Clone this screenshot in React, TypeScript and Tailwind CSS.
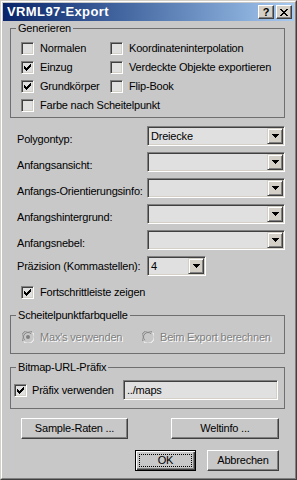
import type { ReactNode } from 'react'

const checkPath =
    'M8 2h1v1h-1z M7 3h2v1h-2z M2 4h1v1h-1z M6 4h3v1h-3z M2 5h2v1h-2z M5 5h3v1h-3z M2 6h5v1h-5z M3 7h3v1h-3z M4 8h1v1h-1z'

function Check({ checked }: { checked?: boolean }) {
    return (
        <span className="block h-[13px] w-[13px] shrink-0 border border-t-[#808080] border-l-[#808080] border-b-white border-r-white bg-[#e0e0e0] shadow-[inset_1px_1px_0_#404040,inset_-1px_-1px_0_#d4d0c8]">
            {checked && (
                <svg width="11" height="11" viewBox="0 0 11 11" className="block">
                    <path d={checkPath} fill="#000" />
                </svg>
            )}
        </span>
    )
}

function CheckRow({ label, checked }: { label: string, checked?: boolean }) {
    return (
        <label className="flex items-center gap-[6px] whitespace-nowrap">
            <Check checked={checked} />
            {label}
        </label>
    )
}

function Radio({ checked }: { checked?: boolean }) {
    return (
        <svg width="12" height="12" viewBox="0 0 12 12" className="block shrink-0">
            <path d="M1.5 10.5 A6 6 0 0 1 10.5 1.5" stroke="#808080" strokeWidth="1" fill="none" />
            <path d="M10.5 1.5 A6 6 0 0 1 1.5 10.5" stroke="#ffffff" strokeWidth="1" fill="none" />
            <circle cx="6" cy="6" r="4.5" fill="#c8c8c8" />
            <path d="M2.8 9.2 A4.5 4.5 0 0 1 9.2 2.8" stroke="#404040" strokeWidth="1" fill="none" opacity="0.5" />
            {checked && <circle cx="6" cy="6" r="2" fill="#808080" />}
        </svg>
    )
}

function Group({ title, children, className = '' }: { title: string, children: ReactNode, className?: string }) {
    return (
        <fieldset className={`border border-[#6f6f6f] pl-[3px] ${className}`}>
            <legend className="ml-[2px] px-[2px] leading-[13px]">{title}</legend>
            {children}
        </fieldset>
    )
}

function Combo({ value, width }: { value?: string, width: string }) {
    return (
        <div className={`flex h-[20px] ${width} items-center justify-between border border-t-[#808080] border-l-[#808080] border-b-white border-r-white bg-[#e0e0e0] shadow-[inset_1px_1px_0_#404040,inset_-1px_-1px_0_#d4d0c8]`}>
            <span className="pl-[3px] pt-[1px]">{value}</span>
            <span className="mr-[1px] mt-[1px] flex h-[16px] w-[16px] items-center justify-center self-start border border-t-[#d4d0c8] border-l-[#d4d0c8] border-r-[#404040] border-b-[#404040] bg-[#d4d0c8] shadow-[inset_1px_1px_0_#ffffff,inset_-1px_-1px_0_#808080]">
                <svg width="7" height="4" viewBox="0 0 7 4" className="block">
                    <path d="M0 0h7v1h-7z M1 1h5v1h-5z M2 2h3v1h-3z M3 3h1v1h-1z" fill="#000" />
                </svg>
            </span>
        </div>
    )
}

function Btn({ children, className = '' }: { children: ReactNode, className?: string }) {
    return (
        <button className={`flex h-[21px] items-center justify-center border border-t-white border-l-white border-r-[#404040] border-b-[#404040] bg-[#c8c8c8] shadow-[inset_-1px_-1px_0_#808080] ${className}`}>
            {children}
        </button>
    )
}

const rows = [
    { label: 'Polygontyp:', value: 'Dreiecke' },
    { label: 'Anfangsansicht:', value: '' },
    { label: 'Anfangs-Orientierungsinfo:', value: '' },
    { label: 'Anfangshintergrund:', value: '' },
    { label: 'Anfangsnebel:', value: '' },
]

export default function App() {
    return (
        <div className="h-[480px] w-[297px] border border-t-[#d4d0c8] border-l-[#d4d0c8] border-r-[#404040] border-b-[#404040] font-['Liberation_Sans',Arial,sans-serif] text-[11px] leading-[13px] tracking-[-0.2px] text-black">
            <div className="h-full border border-t-white border-l-white border-r-[#808080] border-b-[#808080] bg-[#c8c8c8] p-[1px]">
                {/* Titelleiste */}
                <div className="flex h-[18px] items-center justify-between bg-linear-to-r from-[#0a246a] to-[#a6caf0] pl-[4px] pr-[2px]">
                    <span className="text-[13px] font-bold leading-[18px] tracking-[0.4px] text-white">VRML97-Export</span>
                    <div className="flex gap-[2px]">
                        <span className="flex h-[14px] w-[16px] items-center justify-center border border-t-white border-l-white border-r-[#404040] border-b-[#404040] bg-[#d4d0c8] text-[11px] font-bold leading-[12px] shadow-[inset_-1px_-1px_0_#808080]">?</span>
                        <span className="flex h-[14px] w-[16px] items-center justify-center border border-t-white border-l-white border-r-[#404040] border-b-[#404040] bg-[#d4d0c8] shadow-[inset_-1px_-1px_0_#808080]">
                            <svg width="8" height="7" viewBox="0 0 8 7" className="block">
                                <path d="M0 0h2v1h-2z M6 0h2v1h-2z M1 1h2v1h-2z M5 1h2v1h-2z M2 2h4v1h-4z M3 3h2v1h-2z M2 4h4v1h-4z M1 5h2v1h-2z M5 5h2v1h-2z M0 6h2v1h-2z M6 6h2v1h-2z" fill="#000" />
                            </svg>
                        </span>
                    </div>
                </div>

                <div className="flex flex-col pl-[7px] pr-[9px]">
                    <Group title="Generieren" className="mt-[1px] pb-[2px]">
                        <div className="grid grid-cols-[89px_1fr] pl-[7px] pt-[4px]">
                            <div className="flex h-[19px] items-center"><CheckRow label="Normalen" /></div>
                            <div className="flex h-[19px] items-center"><CheckRow label="Koordinateninterpolation" /></div>
                            <div className="flex h-[19px] items-center"><CheckRow label="Einzug" checked /></div>
                            <div className="flex h-[19px] items-center"><CheckRow label="Verdeckte Objekte exportieren" /></div>
                            <div className="flex h-[19px] items-center"><CheckRow label="Grundkörper" checked /></div>
                            <div className="flex h-[19px] items-center"><CheckRow label="Flip-Book" /></div>
                            <div className="col-span-2 flex h-[19px] items-center"><CheckRow label="Farbe nach Scheitelpunkt" /></div>
                        </div>
                    </Group>

                    <div className="mt-[8px] flex flex-col gap-[6px]">
                        {rows.map(r => (
                            <div key={r.label} className="grid grid-cols-[130px_138px] pl-[7px]">
                                <span className="mt-[7px] whitespace-nowrap">{r.label}</span>
                                <Combo value={r.value} width="w-[138px]" />
                            </div>
                        ))}
                        <div className="grid grid-cols-[130px_59px] pl-[7px]">
                            <span className="mt-[4px] whitespace-nowrap">Präzision (Kommastellen):</span>
                            <Combo value="4" width="w-[59px]" />
                        </div>
                    </div>

                    <div className="mt-[10px] pl-[11px]">
                        <CheckRow label="Fortschrittleiste zeigen" checked />
                    </div>

                    <Group title="Scheitelpunktfarbquelle" className="mt-[10px] pb-[9px]">
                        <div className="box-content flex h-[14px] items-center pl-[8px] pt-[8px] text-[#808080] [text-shadow:1px_1px_0_#ffffff]">
                            <div className="flex w-[120px] items-center gap-[6px] whitespace-nowrap">
                                <Radio checked />
                                Max's verwenden
                            </div>
                            <div className="flex items-center gap-[6px] whitespace-nowrap">
                                <Radio />
                                Beim Export berechnen
                            </div>
                        </div>
                    </Group>

                    <Group title="Bitmap-URL-Präfix" className="mt-[7px] pb-[8px] pr-[6px]">
                        <div className="flex items-center pt-[6px]">
                            <label className="flex items-center gap-[5px] whitespace-nowrap">
                                <Check checked />
                                Präfix verwenden
                            </label>
                            <div className="ml-auto flex h-[20px] w-[155px] items-center border border-t-[#808080] border-l-[#808080] border-b-white border-r-white bg-[#e0e0e0] pl-[3px] shadow-[inset_1px_1px_0_#404040,inset_-1px_-1px_0_#d4d0c8]">
                                ../maps
                            </div>
                        </div>
                    </Group>

                    <div className="mt-[9px] flex justify-between pl-[11px] pr-[6px]">
                        <Btn className="w-[107px]">Sample-Raten ...</Btn>
                        <Btn className="w-[108px]">Weltinfo ...</Btn>
                    </div>

                    <div className="mt-[11px] flex justify-end gap-[11px] pr-[6px]">
                        <button className="flex h-[21px] w-[61px] border border-black bg-[#c8c8c8] p-[3px] shadow-[inset_1px_1px_0_#ffffff,inset_-1px_-1px_0_#404040,inset_-2px_-2px_0_#808080]">
                            <span className="flex flex-1 items-center justify-center border border-dotted border-black">OK</span>
                        </button>
                        <Btn className="w-[72px]">Abbrechen</Btn>
                    </div>
                </div>
            </div>
        </div>
    )
}
